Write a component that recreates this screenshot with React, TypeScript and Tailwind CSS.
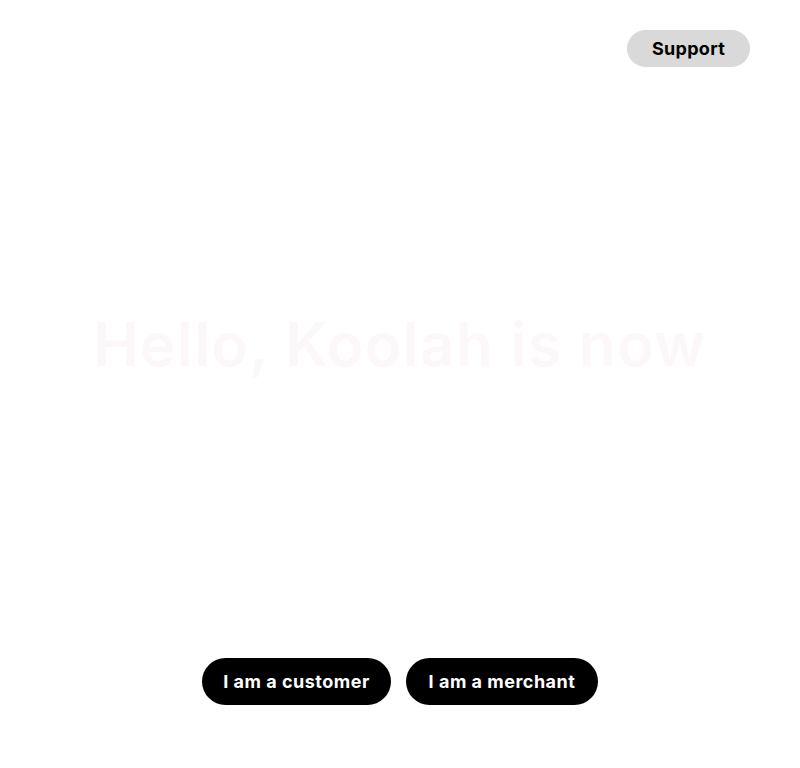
import React from "react";

export default function App() {
  return (
    <div
      className="w-[800px] h-[768px] bg-white flex flex-col"
      style={{ fontFamily: "Inter, 'Noto Sans', sans-serif" }}
    >
      <div className="flex justify-end pt-[30px] pr-[50px]">
        <button className="h-[37px] w-[123px] rounded-full bg-[#d9d9d9] text-black text-[18px] font-bold tracking-[0.3px]">
          Support
        </button>
      </div>
      <div className="flex-1 flex items-center justify-center pb-[38px]">
        <h1 className="text-[60px] font-semibold text-[#fcf8fa] tracking-[1.5px]">
          Hello, Koolah is now
        </h1>
      </div>
      <div className="flex justify-center gap-[15px] pb-[63px]">
        <button className="h-[47px] w-[189px] rounded-full bg-black text-white text-[18px] font-bold tracking-[0.5px]">
          I am a customer
        </button>
        <button className="h-[47px] w-[192px] rounded-full bg-black text-white text-[18px] font-bold tracking-[0.5px]">
          I am a merchant
        </button>
      </div>
    </div>
  );
}
